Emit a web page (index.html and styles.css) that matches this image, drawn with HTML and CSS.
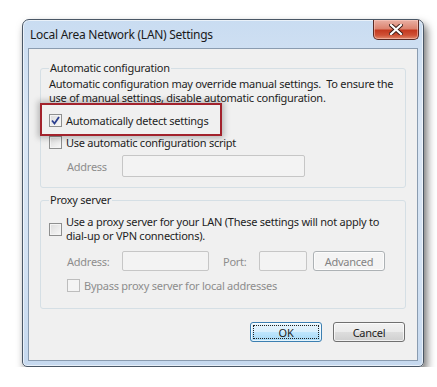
FILE: index.html
```html
<!DOCTYPE html>
<html lang="en">
<head>
    <meta charset="UTF-8">
    <title>Local Area Network (LAN) Settings</title>
    <link rel="stylesheet" href="styles.css">
</head>
<body>
    <div class="window">
        <div class="titlebar">
            <span class="title">Local Area Network (LAN) Settings</span>
            <button class="close" aria-label="Close">
                <svg width="14" height="11" viewBox="0 0 14 11">
                    <path d="M2 1 L12 10 M12 1 L2 10" stroke="#3a1a14" stroke-width="4" stroke-linecap="square"/>
                    <path d="M2 1 L12 10 M12 1 L2 10" stroke="#ffffff" stroke-width="2.2" stroke-linecap="square"/>
                </svg>
            </button>
        </div>

        <div class="client">
            <!-- Automatic configuration -->
            <fieldset class="group auto">
                <legend>Automatic configuration</legend>
                <p class="desc">Automatic configuration may override manual settings.&nbsp; To ensure the<br>use of manual settings, disable automatic configuration.</p>
                <div class="row check-row first">
                    <span class="box checked">
                        <svg width="9" height="9" viewBox="0 0 9 9"><path d="M1 4.5 L3.5 7.5 L8 1" fill="none" stroke="#2b3f8f" stroke-width="1.8"/></svg>
                    </span>
                    <span>Automatically detect settings</span>
                </div>
                <div class="row check-row">
                    <span class="box"></span>
                    <span>Use automatic configuration script</span>
                </div>
                <div class="row field-row script">
                    <span class="muted label-addr">Address</span>
                    <span class="input wide"></span>
                </div>
                <div class="highlight"></div>
            </fieldset>

            <!-- Proxy server -->
            <fieldset class="group proxy">
                <legend>Proxy server</legend>
                <div class="row proxy-row">
                    <span class="box"></span>
                    <span>Use a proxy server for your LAN (These settings will not apply to<br>dial-up or VPN connections).</span>
                </div>
                <div class="row field-row ports">
                    <span class="muted label-addr2">Address:</span>
                    <span class="input addr"></span>
                    <span class="muted label-port">Port:</span>
                    <span class="input port"></span>
                    <span class="btn disabled">Advanced</span>
                </div>
                <div class="row check-row bypass">
                    <span class="box off"></span>
                    <span class="muted">Bypass proxy server for local addresses</span>
                </div>
            </fieldset>

            <div class="actions">
                <span class="btn default"><span class="focus">OK</span></span>
                <span class="btn">Cancel</span>
            </div>
        </div>
    </div>
</body>
</html>
```

FILE: styles.css
```css
/* Dialog */
body {
    margin: 0;
    padding: 19px 0 0 22px;
    background: #ffffff;
    font-family: 'Noto Sans', sans-serif;
    font-size: 11px;
    letter-spacing: -0.25px;
    color: #1e1e1e;
}

.window {
    width: 390px;
    height: 341px;
    border: 1px solid #4a5766;
    border-radius: 7px 7px 5px 5px;
    background: linear-gradient(180deg, #c9dcf1 0%, #dbe7f5 30%, #d3e2f3 70%, #c6d9ef 100%);
    box-shadow: 3px 5px 9px rgba(0, 0, 0, 0.55), inset 0 0 0 1px rgba(255, 255, 255, 0.6);
    display: flex;
    flex-direction: column;
    padding: 0 5px 5px 5px;
}

.titlebar {
    height: 28px;
    display: flex;
    align-items: center;
    justify-content: space-between;
}

.title {
    font-size: 12px;
    letter-spacing: -0.27px;
    padding-left: 2px;
    margin-top: 1px;
    color: #1b1b1b;
}

.close {
    align-self: flex-start;
    width: 46px;
    height: 20px;
    margin-right: -1px;
    border: 1px solid #5a2a24;
    border-top: none;
    border-radius: 0 0 5px 5px;
    background: linear-gradient(180deg, #e9b0a4 0%, #dc8470 45%, #c43a20 55%, #cf5136 80%, #e08a6c 100%);
    box-shadow: inset 0 0 0 1px rgba(255, 210, 200, 0.5);
    display: flex;
    align-items: center;
    justify-content: center;
    padding: 0;
}

.client {
    flex: 1;
    background: #f0f0f0;
    border: 1px solid #8a9cb0;
    padding: 11px 11px 0 11px;
    display: flex;
    flex-direction: column;
}

.group {
    position: relative;
    margin: 0;
    border: 1px solid #d5dfe5;
    border-radius: 3px;
    padding: 0 8px 10px 8px;
}

.group legend {
    padding: 0 1px;
    font-size: 11px;
    line-height: 16px;
}

.proxy {
    margin-top: 4px;
    padding-bottom: 12px;
}

.desc {
    margin: 1px 0 0 0;
    line-height: 14px;
}

.row {
    display: flex;
    align-items: center;
}

.check-row span + span {
    margin-left: 4px;
}

.first {
    margin-top: 4px;
}

.check-row {
    height: 22px;
}

.box {
    width: 11px;
    height: 11px;
    border: 1px solid #8e8f8f;
    background: linear-gradient(135deg, #dcdcdc, #f8f8f8);
    box-shadow: inset 0 0 0 1px #f4f4f4;
    display: flex;
    align-items: center;
    justify-content: center;
    flex-shrink: 0;
}

.box.off {
    border-color: #bdbdbd;
    background: #f4f4f4;
}

.muted {
    color: #8d8d8d;
}

.field-row {
    margin-top: 2px;
}

.script .label-addr {
    margin-left: 18px;
    width: 55px;
}

.input {
    height: 20px;
    border: 1px solid #c6c6c6;
    background: #f3f3f3;
    box-sizing: border-box;
    border-radius: 2px;
}

.wide {
    width: 183px;
    height: 22px;
}

.proxy-row {
    margin-top: 7px;
    line-height: 14px;
}

.proxy-row .box {
    margin-right: 4px;
}

.ports {
    margin-top: 8px;
}

.label-addr2 {
    margin-left: 18px;
    width: 55px;
}

.addr {
    width: 87px;
}

.label-port {
    margin-left: 14px;
    width: 36px;
}

.port {
    width: 48px;
}

.bypass {
    margin-left: 18px;
    margin-top: 3px;
}

.btn {
    height: 20px;
    box-sizing: border-box;
    border: 1px solid #707070;
    border-radius: 3px;
    background: linear-gradient(180deg, #f2f2f2 0%, #ebebeb 48%, #dddddd 52%, #cfcfcf 100%);
    box-shadow: inset 0 0 0 1px rgba(255, 255, 255, 0.7);
    display: flex;
    align-items: center;
    justify-content: center;
    font-size: 11px;
    color: #1e1e1e;
}

.btn.disabled {
    width: 72px;
    margin-left: 6px;
    border-color: #adb2b5;
    background: #f4f4f4;
    color: #838383;
}

.actions {
    display: flex;
    justify-content: flex-end;
    gap: 11px;
    margin-top: 13px;
    padding-right: 1px;
}

.actions .btn {
    width: 72px;
}

.btn.default {
    border-color: #3c7fb1;
    background: linear-gradient(180deg, #e5f4fc 0%, #d9effc 48%, #bee6fd 52%, #a7d9f5 100%);
    padding: 2px;
}

.focus {
    flex: 1;
    align-self: stretch;
    border: 1px dotted #202020;
    display: flex;
    align-items: center;
    justify-content: center;
}

/* red annotation around the first checkbox */
.highlight {
    position: absolute;
    left: -1px;
    top: 27px;
    width: 178px;
    height: 29px;
    border: 2px solid #a2222c;
    box-shadow: 0 0 6px 2px rgba(0, 0, 0, 0.25);
}
```
